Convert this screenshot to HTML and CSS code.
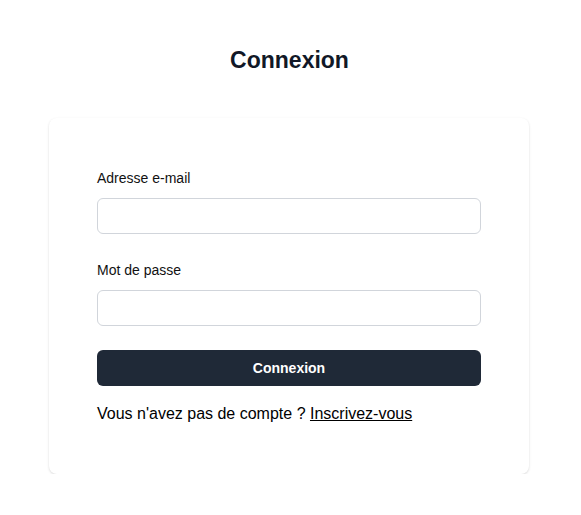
FILE: index.html
```html
<!DOCTYPE html>
<html lang="fr">
<head>
<meta charset="utf-8">
<title>Connexion</title>
<link rel="stylesheet" href="styles.css">
</head>
<body>
<main class="page">
  <h1 class="title">Connexion</h1>
  <form class="card">
    <label class="label" for="email">Adresse e-mail</label>
    <input class="input" id="email" type="email">
    <label class="label" for="pw">Mot de passe</label>
    <input class="input" id="pw" type="password">
    <button class="btn" type="button">Connexion</button>
    <p class="signup">Vous n'avez pas de compte ? <a class="link" href="#">Inscrivez-vous</a></p>
  </form>
</main>
</body>
</html>
```
FILE: styles.css
```css
* { box-sizing: border-box; }
html, body { margin: 0; background: #fff; }
body {
  font-family: "Liberation Sans", Arial, sans-serif;
  color: #111;
}
.page {
  display: flex;
  flex-direction: column;
  align-items: center;
  padding-top: 47px;
}
.title {
  margin: 0 0 45px;
  font-size: 23px;
  line-height: 26px;
  font-weight: 700;
  color: #111827;
  position: relative;
  left: -1px;
}
.card {
  width: 480px;
  margin-left: -3px;
  background: #fff;
  border-radius: 8px;
  box-shadow: 0 1px 3px rgba(0,0,0,0.1), 0 1px 2px rgba(0,0,0,0.05);
  padding: 50px 48px 48px;
  display: flex;
  flex-direction: column;
}
.label {
  font-size: 14px;
  line-height: 20px;
  color: #111;
  margin-bottom: 10px;
}
.input {
  height: 36px;
  border: 1px solid #d1d5db;
  border-radius: 6px;
  margin: 0 0 26px;
  font: inherit;
  background: #fff;
}
#pw { margin-bottom: 24px; }
.btn {
  height: 36px;
  border: none;
  border-radius: 6px;
  background: #1f2937;
  color: #fff;
  font-family: inherit;
  font-size: 14px;
  font-weight: 700;
  margin-bottom: 16px;
}
.signup {
  margin: 0;
  font-size: 16px;
  line-height: 24px;
  color: #000;
}
.link { color: #000; text-decoration: underline; }
```
